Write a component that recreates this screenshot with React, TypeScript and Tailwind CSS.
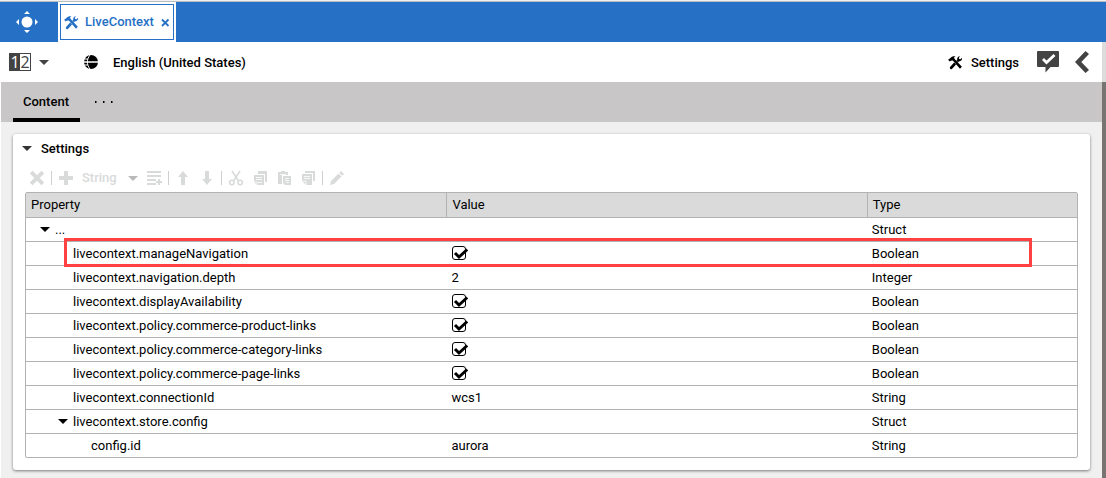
import React from 'react';

interface PropertyRow {
  name: string;
  type: string;
  level: number;
  value?: string;
  checked?: boolean;
  expandable?: boolean;
  highlighted?: boolean;
}

const rows: PropertyRow[] = [
  { name: '...', type: 'Struct', level: 0, expandable: true },
  { name: 'livecontext.manageNavigation', type: 'Boolean', level: 1, checked: true, highlighted: true },
  { name: 'livecontext.navigation.depth', type: 'Integer', level: 1, value: '2' },
  { name: 'livecontext.displayAvailability', type: 'Boolean', level: 1, checked: true },
  { name: 'livecontext.policy.commerce-product-links', type: 'Boolean', level: 1, checked: true },
  { name: 'livecontext.policy.commerce-category-links', type: 'Boolean', level: 1, checked: true },
  { name: 'livecontext.policy.commerce-page-links', type: 'Boolean', level: 1, checked: true },
  { name: 'livecontext.connectionId', type: 'String', level: 1, value: 'wcs1' },
  { name: 'livecontext.store.config', type: 'Struct', level: 1, expandable: true },
  { name: 'config.id', type: 'String', level: 2, value: 'aurora' },
];

const indents = ['pl-[11px]', 'pl-[29px]', 'pl-[47px]'];

const Caret: React.FC<{ className?: string }> = ({ className }) => (
  <svg width="10" height="5" viewBox="0 0 10 5" fill="currentColor" className={className}><path d="M0 0h10L5 5z" /></svg>
);

const ToolsIcon: React.FC = () => (
  <svg width="15" height="15" viewBox="0 0 16 16" fill="currentColor">
    <path d="M1 4.6 3.8 2C4.9 1.2 6.3 1.1 8 1.7L6.5 2.5l.4 1.4L14.8 12.6 12.8 14.6 5.3 6 4.200 5.500 3.300 6.400 2.700 6.100 1.900 6.900 0 5.100z" />
    <path d="M12.900 1.200 11.500 2.900 11.900 4.200 13.300 4.400 14.800 2.900C15.400 5 14.200 6.800 11.700 6.800L10.600 7.800 8.900 6.100 9.800 5C9.500 2.800 10.700 1.200 12.900 1.200zM6.500 7.900 8.600 10.200 4.200 14.800C2.900 15.800 1.300 14.300 2.200 12.800z" />
  </svg>
);

const GlobeIcon: React.FC = () => (
  <svg width="14" height="14" viewBox="0 0 14 14">
    <circle cx="7" cy="7" r="7" fill="currentColor" />
    <path d="M0 7h14" stroke="#fff" strokeWidth="1.5" />
    <path d="M6 0C2.500 4.500 2.500 9.500 6 14M0 4h4M0 10h4" fill="none" stroke="#fff" />
  </svg>
);

const ToolButton: React.FC<{ label: string; children: React.ReactNode }> = ({ label, children }) => (
  <button aria-label={label} className="flex size-6 items-center justify-center">
    <svg width="16" height="16" viewBox="0 0 16 16" fill="currentColor">{children}</svg>
  </button>
);

const Separator: React.FC = () => <span className="mx-0.5 h-3.5 w-px bg-[#d0d0d0]" />;

const TopBar: React.FC = () => (
  <header className="flex h-[42px] border-t border-[#f0f0f0] bg-[#2671c5]">
    <div className="flex flex-1 border-t border-[#b9bcc0]">
      <button aria-label="Home" className="flex w-[58px] items-center justify-center pr-1">
        <svg width="24" height="24" viewBox="0 0 24 24" fill="#fff">
          <circle cx="12" cy="12" r="5.5" />
          <path d="M12 1l3 3H9zM12 23l3-3H9zM1 12l3-3v6zM23 12l-3-3v6z" />
        </svg>
      </button>
      <div className="bg-white p-0.5">
        <div className="flex h-full items-center border border-[#2671c5] px-[3px] text-[#2671c5]">
          <ToolsIcon />
          <span className="ml-1.5 font-medium">LiveContext</span>
          <button aria-label="Close LiveContext" className="ml-[7px]">
            <svg width="9" height="9" viewBox="0 0 9 9" fill="none" stroke="currentColor" strokeWidth="1.800"><path d="M1 1.500l6.500 6.500M7.500 1.500 1 8" /></svg>
          </button>
        </div>
      </div>
    </div>
  </header>
);

const DocumentBar: React.FC = () => (
  <div className="flex h-10 items-center bg-white pr-[13px] pl-[9px] font-medium">
    <button aria-label="Versions" className="flex items-center text-[#434343]">
      <span className="flex h-[18px] w-[22px] border border-[#434343] font-['Open_Sans',sans-serif] text-base leading-4 font-normal">
        <span className="w-[10px] bg-[#434343] text-center text-white">1</span>
        <span className="flex-1 text-center">2</span>
      </span>
      <Caret className="ml-2" />
    </button>
    <button className="ml-[35px] flex items-center gap-[15px]">
      <GlobeIcon />
      <span className="pt-0.5">English (United States)</span>
    </button>
    <button className="ml-auto flex items-center gap-2">
      <ToolsIcon />
      <span className="pt-0.5">Settings</span>
    </button>
    <button aria-label="Approve" className="ml-[18px] text-[#434343]">
      <svg width="22" height="22" viewBox="0 0 22 22" fill="currentColor">
        <path d="M1 0h20a1 1 0 0 1 1 1v14a1 1 0 0 1-1 1h-7.500L8.500 21.500V16H1a1 1 0 0 1-1-1V1a1 1 0 0 1 1-1z" />
        <path d="M6 8l3.500 3.500L17.500 4" fill="none" stroke="#fff" strokeWidth="2.800" />
      </svg>
    </button>
    <button aria-label="Collapse" className="ml-4 text-[#434343]">
      <svg width="14" height="22" viewBox="0 0 14 22" fill="currentColor"><path d="M10.500 0l3.500 3-7.700 8 7.700 8-3.500 3L0 11z" /></svg>
    </button>
  </div>
);

const Toolbar: React.FC = () => (
  <div className="mt-1 mb-0.5 flex h-6 items-center text-[#d9dada]">
    <ToolButton label="Remove"><path d="M3.500 .8 8 5.300 12.500 .8 15.200 3.500 10.700 8 15.200 12.500 12.500 15.200 8 10.700 3.500 15.200 .8 12.500 5.300 8 .8 3.500z" /></ToolButton>
    <Separator />
    <ToolButton label="Add"><path d="M6 1h4v5h5v4h-5v5H6v-5H1V6h5z" /></ToolButton>
    <button className="flex h-6 w-16 items-center justify-between px-1 font-medium">
      String
      <Caret className="text-[#b9b9b9]" />
    </button>
    <ToolButton label="Add list item"><path d="M1 1h14v2H1zM1 5h14v2H1zM1 9h9v2H1zM1 13h9v2H1zM12 9h2v2h2v2h-2v2h-2v-2h-2v-2h2z" /></ToolButton>
    <Separator />
    <ToolButton label="Move up"><path d="M8 1l5 6h-3v8H6V7H3z" /></ToolButton>
    <ToolButton label="Move down"><path d="M8 15l5-6h-3V1H6v8H3z" /></ToolButton>
    <Separator />
    <ToolButton label="Cut">
      <g fill="none" stroke="currentColor" strokeWidth="1.600"><path d="M4 1l6.500 10M12 1 5.500 11" /><circle cx="3.800" cy="12.500" r="2.200" /><circle cx="12.200" cy="12.500" r="2.200" /></g>
    </ToolButton>
    <ToolButton label="Copy">
      <path d="M6 1h9v11h-2V4H6zM2 5h10v10H5l-3-3z" />
      <path d="M4 7.500h6M4 9.500h6M6 12.500h4M5 15v-3H2" stroke="#fff" fill="none" strokeWidth=".8" />
    </ToolButton>
    <ToolButton label="Paste">
      <path d="M2 2h3V1h4v1h3v3H6v9H2zM7 6h8v9H9l-2-2z" />
      <path d="M4 4.500h6M9 8.500h4M9 10.500h4M10 12.500h3" stroke="#fff" fill="none" strokeWidth=".8" />
    </ToolButton>
    <ToolButton label="Duplicate">
      <path d="M5 1h10v10h-2V3H5zM2 4h10v11H6l-4-4z" />
      <path d="M4 6.500h6M4 8.500h6M6 15v-4H2" stroke="#fff" fill="none" strokeWidth=".8" />
    </ToolButton>
    <Separator />
    <ToolButton label="Edit"><path d="M1 15l1-4 7.500-7.500 3 3L5 14zM10.300 2.700 12 1l3 3-1.700 1.700z" /></ToolButton>
  </div>
);

const CheckField: React.FC<{ label: string }> = ({ label }) => (
  <span className="relative block h-[18px] w-[18px]">
    <input type="checkbox" defaultChecked aria-label={label} className="peer mt-0.5 ml-px block size-3.5 appearance-none rounded-[3px] border border-black bg-white" />
    <svg width="18" height="18" viewBox="0 0 18 18" fill="none" className="pointer-events-none absolute top-0 left-0 hidden peer-checked:block">
      <path d="M4 7 8 11 16.200 3.500" stroke="#000" strokeWidth="3" />
    </svg>
  </span>
);

const PropertyTable: React.FC = () => (
  <table className="w-full table-fixed border-separate border-spacing-0 rounded-[2px] border border-[#b2b2b2] text-left">
    <thead>
      <tr className="h-[25px] bg-[#dadada]">
        <th className="w-2/5 border-b border-[#b2b2b2] px-[5px] font-normal">Property</th>
        <th className="w-2/5 border-b border-l border-[#b2b2b2] px-[5px] font-normal">Value</th>
        <th className="w-1/5 border-b border-l border-[#b2b2b2] px-[5px] font-normal">Type</th>
      </tr>
    </thead>
    <tbody className="[&>tr]:h-6 [&>tr:last-child]:h-[23px] [&>tr:not(:last-child)>td]:border-b [&>tr>td]:border-[#b2b2b2]">
      {rows.map((row) => (
        <tr key={row.name} className="relative">
          <td className={indents[row.level]}>
            <span className="flex items-center">
              <span className="flex w-[18px] pl-[3px]">
                {row.expandable && <button aria-label={'Collapse ' + row.name} className="block"><Caret /></button>}
              </span>
              {row.name}
            </span>
            {row.highlighted && (
              <span className="pointer-events-none absolute -top-1 right-[45px] -bottom-px left-[38px] border-3 border-[#ff4141]" />
            )}
          </td>
          <td className="px-[5px]">{row.checked ? <CheckField label={row.name} /> : row.value}</td>
          <td className="px-[5px]">{row.type}</td>
        </tr>
      ))}
    </tbody>
  </table>
);

const App: React.FC = () => {
  return (
    <div className="flex min-h-screen flex-col bg-white font-[Roboto,sans-serif] text-[13px] leading-[18px] text-black">
      <TopBar />
      <div className="flex flex-1">
        <main className="flex min-w-0 flex-1 flex-col">
          <DocumentBar />
          <nav className="ml-px flex h-10 bg-[#c8c6c7] pl-3">
            <button className="border-b-4 border-black pt-1 pr-[11px] pl-2.5 font-medium">Content</button>
            <button aria-label="More tabs" className="ml-[15px] flex items-center">
              <svg width="18" height="2" viewBox="0 0 18 2"><path d="M0 0h1.500v2H0zM8 0h1.500v2H8zM16 0h1.500v2H16z" /></svg>
            </button>
          </nav>
          <div className="ml-px flex-1 bg-[#f0f0f0] px-3 pt-3 pb-2">
            <section className="rounded-[3px] bg-white px-3 pb-3 shadow-[0_1px_3px_rgba(0,0,0,0.5)]">
              <h2 className="-ml-[3px] flex h-7 items-center font-medium">
                <button className="flex items-center gap-[9px]"><Caret className="text-[#333]" /><span className="pt-0.5">Settings</span></button>
              </h2>
              <Toolbar />
              <PropertyTable />
            </section>
          </div>
        </main>
        <aside className="flex w-1 flex-col bg-[#787472]">
          <div className="h-10 bg-[#dcdcdc]" />
        </aside>
      </div>
    </div>
  );
};

export default App;
